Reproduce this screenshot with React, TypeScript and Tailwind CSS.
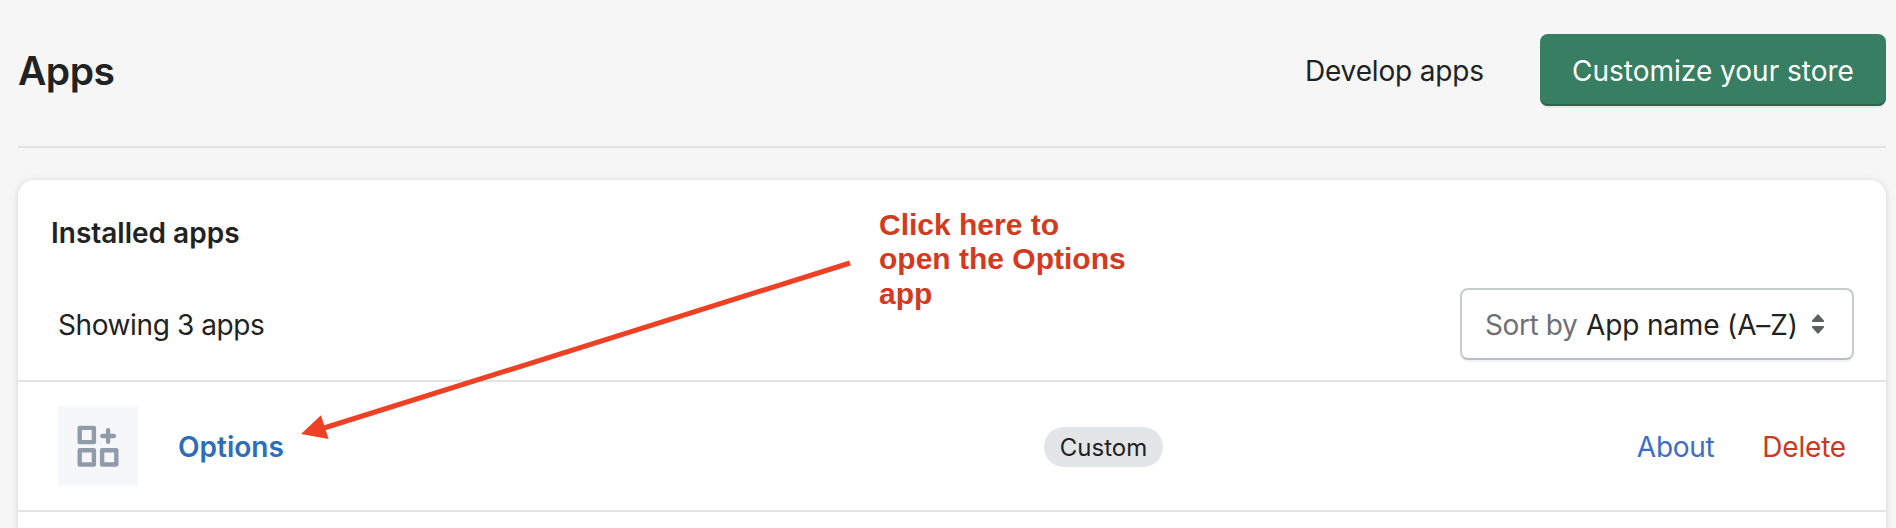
import React from 'react';

function AppIcon() {
  return (
    <div className="h-20 w-20 shrink-0 bg-[#f5f7f9]">
      <svg width="80" height="80" viewBox="0 0 80 80" fill="none" stroke="#919cab" strokeWidth="4.4" strokeLinejoin="round" strokeLinecap="round">
        <rect x="21.7" y="21.9" width="14.2" height="14.2" />
        <rect x="21.7" y="44.3" width="14.2" height="14.2" />
        <rect x="44.1" y="44.3" width="14.2" height="14.2" />
        <path d="M50.1 24.2v11.6M44.300 30h11.600" />
      </svg>
    </div>
  );
}

function SortSelect() {
  return (
    <button className="flex h-[72px] w-[394px] items-center rounded-lg border-2 border-[#c9cccf] border-b-[#babfc3] bg-white pl-[23px] text-[28px] shadow-[0_2px_0_rgba(0,0,0,0.05)]">
      <span className="w-[101px] whitespace-nowrap pt-[2px] text-left tracking-[-0.4px] text-[#6d7175]">Sort by</span>
      <span className="w-[226px] whitespace-nowrap pt-[2px] text-left tracking-[-0.15px] text-[#202223]">App name (A–Z)</span>
      <svg className="shrink-0" width="12" height="20" viewBox="0 0 12 20" fill="#5c5f62">
        <path d="M6 0 12 6.4Q12.2 8 11.2 8H.8Q-.2 8 0 6.4ZM6 20 12 13.6Q12.2 12 11.2 12H.8Q-.2 12 0 13.6Z" />
      </svg>
    </button>
  );
}

export default function App() {
  return (
    <div className="relative h-[528px] w-[1896px] overflow-hidden bg-[#f6f6f7] pl-[18px] pr-[10px] font-['Inter',sans-serif] text-[28px] leading-10 text-[#202223]">
      <header className="flex h-[148px] items-start justify-between border-b-2 border-[#e1e3e5] pt-[34px]">
        <h1 className="flex h-[74px] items-center text-[39px] font-semibold tracking-[-0.5px]">Apps</h1>
        <div className="flex items-center gap-14">
          <button className="whitespace-nowrap pt-[2px] tracking-[-0.15px]">Develop apps</button>
          <button className="h-[72px] w-[346px] whitespace-nowrap rounded-lg bg-[#377e62] pt-[2px] text-white shadow-[inset_0_-2px_0_#2c674f,0_2px_0_rgba(0,0,0,0.05)]">Customize your store</button>
        </div>
      </header>
      <main className="mt-8 h-[400px] rounded-t-2xl bg-white shadow-[0_0_10px_rgba(23,24,24,0.08),0_1px_4px_rgba(0,0,0,0.08)]">
        <h2 className="h-[108px] pl-[33px] pt-[33px] font-semibold">Installed apps</h2>
        <div className="flex h-[94px] items-start justify-between border-b-2 border-[#e1e3e5] pl-10 pr-8">
          <p className="pt-[17px] tracking-[-0.4px]">Showing 3 apps</p>
          <SortSelect />
        </div>
        <div className="flex h-[130px] items-center border-b-2 border-[#e1e3e5] pl-10 pr-10">
          <AppIcon />
          <a className="ml-10 w-[866px] pt-[2px] font-semibold text-[#2c6ebb]">Options</a>
          <span className="mt-[2px] flex h-10 w-[119px] items-center justify-center rounded-full bg-[#e4e5e7] pt-px text-[24px]">Custom</span>
          <a className="ml-auto pt-[2px] tracking-[-0.3px] text-[#3b6dcb]">About</a>
          <a className="ml-12 pt-[2px] tracking-[-0.2px] text-[#c93a25]">Delete</a>
        </div>
      </main>
      <svg className="absolute left-[300px] top-[255px]" width="560" height="190" viewBox="300 255 560 190">
        <path d="M850 263 324 428" stroke="#ed4024" strokeWidth="5" />
        <path d="M301 434 321 415.300 328.500 439Z" fill="#ed4024" />
      </svg>
      <p className="absolute left-[879px] top-[208px] whitespace-nowrap font-['Liberation_Sans',sans-serif] text-[30px] font-bold leading-[34.400px] text-[#d33a20]">
        Click here to<br />open the Options<br />app
      </p>
    </div>
  );
}
